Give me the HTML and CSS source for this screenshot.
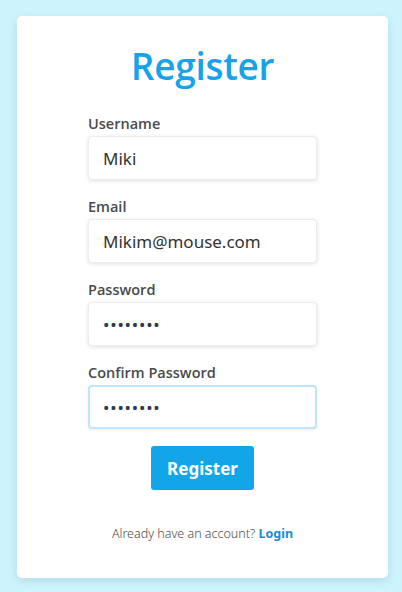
FILE: index.html
```html
<!DOCTYPE html>
<html lang="en">
<head>
<meta charset="utf-8">
<title>Register</title>
<link rel="stylesheet" href="styles.css">
</head>
<body>
<div class="card">
  <h1 class="title">Register</h1>
  <form class="form">
    <label class="field">
      <span class="label">Username</span>
      <input class="input" type="text" value="Miki">
    </label>
    <label class="field">
      <span class="label">Email</span>
      <input class="input" type="email" value="Mikim@mouse.com">
    </label>
    <label class="field">
      <span class="label">Password</span>
      <input class="input" type="password" value="password">
    </label>
    <label class="field">
      <span class="label">Confirm Password</span>
      <input class="input input-focus" type="password" value="password">
    </label>
    <div class="actions">
      <button class="btn" type="button">Register</button>
    </div>
  </form>
  <p class="footer">Already have an account? <a class="link" href="#">Login</a></p>
</div>
</body>
</html>
```
FILE: styles.css
```css
html, body {
  margin: 0;
  padding: 0;
}
body {
  background: #cdf4fc;
  font-family: "Noto Sans", "Open Sans", sans-serif;
  width: 402px;
  height: 592px;
  overflow: hidden;
}
.card {
  box-sizing: border-box;
  margin: 16px 0 0 17px;
  width: 371px;
  height: 562px;
  background: #ffffff;
  border-radius: 5px;
  box-shadow: 0 3px 10px rgba(0, 60, 80, 0.12);
  padding-top: 24px;
  display: flex;
  flex-direction: column;
  align-items: center;
}
.title {
  margin: 0;
  font-family: "Open Sans", "Noto Sans", sans-serif;
  font-size: 37px;
  line-height: 52px;
  font-weight: 600;
  letter-spacing: -0.3px;
  color: #17a3e9;
}
.form {
  width: 229px;
  margin-top: 22px;
  display: flex;
  flex-direction: column;
}
.field {
  display: flex;
  flex-direction: column;
  margin-bottom: 17px;
}
.label {
  font-family: "Open Sans", "Noto Sans", sans-serif;
  font-size: 14.5px;
  line-height: 20px;
  font-weight: 600;
  color: #4a4a4a;
  margin-bottom: 2px;
}
.input {
  box-sizing: border-box;
  width: 229px;
  height: 44px;
  border: 1px solid #ececec;
  border-radius: 4px;
  box-shadow: 0 1px 4px rgba(0, 0, 0, 0.12);
  padding: 0 14px;
  font-family: inherit;
  font-size: 17px;
  color: #333333;
  background: #ffffff;
  outline: none;
}
.input[type="password"] {
  font-size: 17px;
  letter-spacing: 0.8px;
  color: #2f3a4a;
}
.input-focus {
  border: 2px solid #bfe6fa;
  padding: 0 13px;
  box-shadow: 0 1px 3px rgba(0, 0, 0, 0.08);
}
.actions {
  display: flex;
  justify-content: center;
}
.btn {
  width: 103px;
  height: 44px;
  border: none;
  border-radius: 3px;
  background: #12a6e9;
  color: #ffffff;
  font-family: inherit;
  font-size: 17px;
  font-weight: 700;
  padding: 0;
}
.footer {
  margin: 36px 0 0;
  font-size: 12.5px;
  line-height: 16px;
  font-weight: 300;
  color: #4a4a4a;
}
.link {
  color: #1a8bd5;
  font-weight: 700;
  text-decoration: none;
}
```
